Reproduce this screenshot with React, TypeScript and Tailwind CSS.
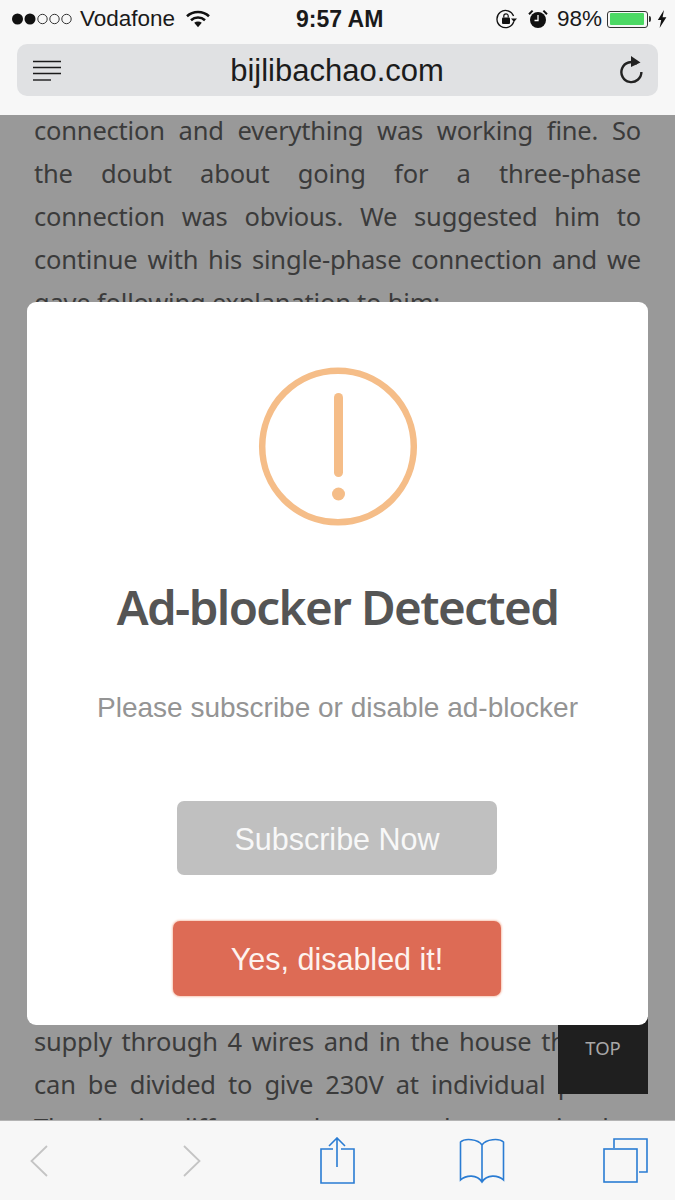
function SignalDots() {
  return (
    <svg width="60" height="14" viewBox="0 0 60 14" className="shrink-0">
      <circle cx="5.5" cy="7" r="5.5" fill="#111" />
      <circle cx="18" cy="7" r="5.5" fill="#111" />
      <circle cx="30.5" cy="7" r="4.7" fill="none" stroke="#333" strokeWidth="1" />
      <circle cx="42.5" cy="7" r="4.7" fill="none" stroke="#333" strokeWidth="1" />
      <circle cx="54.5" cy="7" r="4.7" fill="none" stroke="#333" strokeWidth="1" />
    </svg>
  )
}

function Wifi() {
  return (
    <svg width="24" height="18" viewBox="0 0 24 18" className="shrink-0">
      <path d="M1 6.2C7 .6 17 .6 23 6.2" fill="none" stroke="#111" strokeWidth="2.6" />
      <path d="M5 10.2c4-3.6 10-3.6 14 0" fill="none" stroke="#111" strokeWidth="2.6" />
      <path d="M8.2 12.8c2.2-1.6 5.4-1.6 7.6 0L12 17.2z" fill="#111" />
    </svg>
  )
}

function RotationLock() {
  return (
    <svg width="22" height="20" viewBox="0 0 22 20" className="shrink-0">
      <path d="M17.8 12.5A8.6 8.6 0 1 1 17.6 7" fill="none" stroke="#111" strokeWidth="1.3" />
      <path d="M15 9.5h6l-3 3.4z" fill="#111" />
      <rect x="6" y="8.5" width="8" height="6.5" rx="1" fill="#111" />
      <path d="M7.8 8.5V7a2.2 2.2 0 0 1 4.4 0v1.5" fill="none" stroke="#111" strokeWidth="1.2" />
    </svg>
  )
}

function Alarm() {
  return (
    <svg width="20" height="20" viewBox="0 0 20 20" className="shrink-0">
      <circle cx="10" cy="11" r="8" fill="#111" />
      <path d="M10 6v5.5H6.5" fill="none" stroke="#fff" strokeWidth="1.3" />
      <path d="M1 5.2 4.6 1.6M19 5.2l-3.6-3.6" fill="none" stroke="#111" strokeWidth="2" />
    </svg>
  )
}

function Battery() {
  return (
    <div className="flex shrink-0 items-center">
      <div className="h-[17px] w-[41px] rounded-[3px] border border-[#333] p-[1.5px]">
        <div className="h-full w-[96%] rounded-[1px] bg-[#4cd964]" />
      </div>
      <div className="ml-px h-[6px] w-[2px] rounded-r-sm bg-[#333]" />
    </div>
  )
}

function Bolt() {
  return (
    <svg width="10" height="18" viewBox="0 0 10 18" className="ml-[6px] shrink-0">
      <path d="M7 0 .8 10h3.4L2.6 18 9.4 7.2H5.6z" fill="#111" />
    </svg>
  )
}

function ReaderIcon() {
  return (
    <svg width="28" height="22" viewBox="0 0 28 22" className="shrink-0">
      <path d="M0 2.5h28M0 8.5h28M0 14.5h28" stroke="#1a1a1a" strokeWidth="1.4" />
      <path d="M0 21h18" stroke="#1a1a1a" strokeWidth="1.4" />
    </svg>
  )
}

function ReloadIcon() {
  return (
    <svg width="26" height="28" viewBox="0 0 26 28" className="shrink-0">
      <path d="M19 7.8A10 10 0 1 0 23.4 16" fill="none" stroke="#222" strokeWidth="2.4" />
      <path d="M13 0v11L22.5 6.5z" fill="#222" />
    </svg>
  )
}

function WarningIcon() {
  return (
    <svg width="160" height="166" viewBox="0 0 160 166" className="shrink-0">
      <circle cx="80" cy="84.5" r="75.8" fill="none" stroke="#f5bd88" strokeWidth="6.5" />
      <rect x="76" y="31" width="9" height="84" rx="4.5" fill="#f5bd88" />
      <circle cx="80.5" cy="132" r="6.5" fill="#f5bd88" />
    </svg>
  )
}

function BackIcon() {
  return (
    <svg width="20" height="34" viewBox="0 0 20 34">
      <path d="M18 2 2.5 17 18 32" fill="none" stroke="#c4c4c4" strokeWidth="1.8" />
    </svg>
  )
}

function ForwardIcon() {
  return (
    <svg width="20" height="34" viewBox="0 0 20 34">
      <path d="M2 2 17.5 17 2 32" fill="none" stroke="#c4c4c4" strokeWidth="1.8" />
    </svg>
  )
}

function ShareIcon() {
  return (
    <svg width="36" height="48" viewBox="0 0 36 48">
      <path d="M13 12H1v34h33V12H21" fill="none" stroke="#2a7cd3" strokeWidth="1.6" />
      <path d="M17 1v29M9 9 17 1 25 9" fill="none" stroke="#2a7cd3" strokeWidth="1.6" />
    </svg>
  )
}

function BookIcon() {
  return (
    <svg width="46" height="46" viewBox="0 0 46 46">
      <path
        d="M23 7C19 1 6 0 1.5 4V42C7 37 18 36 23 44C28 36 39 37 44.5 42V4C40 0 27 1 23 7ZM23 7V43"
        fill="none"
        stroke="#2a7cd3"
        strokeWidth="1.6"
      />
    </svg>
  )
}

function TabsIcon() {
  return (
    <svg width="46" height="46" viewBox="0 0 46 46">
      <rect x="1" y="11" width="33" height="33" fill="none" stroke="#2a7cd3" strokeWidth="1.6" />
      <path d="M11 10V1h33v33h-8" fill="none" stroke="#2a7cd3" strokeWidth="1.6" />
    </svg>
  )
}

const textFont = "font-['Noto_Sans',sans-serif]"

function Line({ children }: { children: string }) {
  return <p className="h-[43px] text-justify leading-[43px] [text-align-last:justify]">{children}</p>
}

export default function App() {
  return (
    <div className="flex h-[1200px] w-[675px] flex-col overflow-hidden bg-[#999] font-['Liberation_Sans',sans-serif]">
      <header className="h-[115px] shrink-0 bg-[#f7f7f7]">
        <div className="flex h-[38px] items-center pr-[8px] pl-[12px] text-[22.5px] text-[#1a1a1a]">
          <div className="flex w-[240px] items-center">
            <SignalDots />
            <span className="ml-[8px]">Vodafone</span>
            <span className="ml-[11px]"><Wifi /></span>
          </div>
          <span className="ml-[44px] text-[23px] font-bold">9:57 AM</span>
          <div className="ml-auto flex items-center">
            <RotationLock />
            <span className="ml-[10px]"><Alarm /></span>
            <span className="ml-[9px]">98%</span>
            <span className="ml-[5px]"><Battery /></span>
            <Bolt />
          </div>
        </div>
        <div className="mx-[17px] mt-[6px] flex h-[52px] items-center justify-between rounded-[10px] bg-[#e0e1e3] pr-[14px] pl-[16px]">
          <ReaderIcon />
          <span className="-ml-[5px] pt-[2px] text-[31px] text-[#1c1c1c]">bijlibachao.com</span>
          <ReloadIcon />
        </div>
      </header>

      <main className={`relative min-h-0 flex-1 overflow-hidden px-[34px] text-[25.5px] tracking-[-0.2px] text-[#3b3b3b] ${textFont}`}>
        <div className="-mt-[6px]">
          <Line>connection and everything was working fine. So</Line>
          <Line>the doubt about going for a three-phase</Line>
          <Line>connection was obvious. We suggested him to</Line>
          <Line>continue with his single-phase connection and we</Line>
          <p className="h-[43px] leading-[43px]">gave following explanation to him:</p>
        </div>
        <div className="mt-[696px]">
          <Line>supply through 4 wires and in the house the load</Line>
          <Line>can be divided to give 230V at individual phases</Line>
          <Line>The basic difference between the two is that</Line>
        </div>

        <a className="absolute top-[900px] left-[558px] flex h-[79px] w-[90px] items-end justify-center bg-[#1f1f1f] pb-[37px] text-[18.5px] leading-none tracking-normal text-[#a8a8a8]">
          TOP
        </a>

        <section className="absolute top-[187px] left-[27px] flex h-[723px] w-[621px] flex-col items-center rounded-[9px] bg-white">
          <div className="mt-[60px]"><WarningIcon /></div>
          <h1 className="mt-[44px] text-[47.5px] leading-[70px] font-semibold tracking-[-1.6px] text-[#555]">Ad-blocker Detected</h1>
          <p className="mt-[46px] font-['Liberation_Sans',sans-serif] text-[28px] leading-[40px] tracking-normal text-[#949494]">
            Please subscribe or disable ad-blocker
          </p>
          <button className="mt-[73px] -ml-px h-[74px] w-[320px] rounded-[7px] bg-[#c0c0c0] pt-[4px] font-['Liberation_Sans',sans-serif] text-[30.5px] tracking-normal text-[#f8f8f8]">
            Subscribe Now
          </button>
          <button className="mt-[46px] -ml-px h-[75px] w-[328px] rounded-[7px] bg-[#dd6b55] pt-[3px] font-['Liberation_Sans',sans-serif] text-[30.5px] tracking-normal text-[#fdf3ef] shadow-[0_0_2px_1px_#f8c9b8]">
            Yes, disabled it!
          </button>
        </section>
      </main>

      <footer className="flex h-[80px] shrink-0 items-center border-t border-[#b4b4b4] bg-[#f7f7f7] pl-[29px]">
        <BackIcon />
        <span className="ml-[133px]"><ForwardIcon /></span>
        <span className="ml-[118px]"><ShareIcon /></span>
        <span className="ml-[103px]"><BookIcon /></span>
        <span className="ml-[98px]"><TabsIcon /></span>
      </footer>
    </div>
  )
}
